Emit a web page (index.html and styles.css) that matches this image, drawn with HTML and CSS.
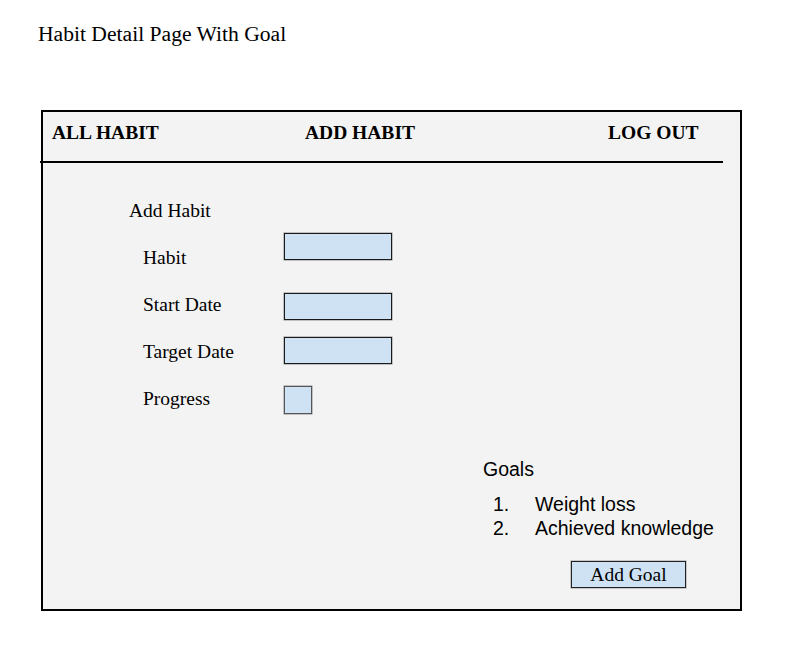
FILE: index.html
```html
<!DOCTYPE html>
<html lang="en">
<head>
<meta charset="utf-8">
<title>Habit Detail Page With Goal</title>
<link rel="stylesheet" href="styles.css">
</head>
<body>
<h1 class="page-title">Habit Detail Page With Goal</h1>
<div class="frame">
  <nav class="nav">
    <a class="nav-link">ALL HABIT</a>
    <a class="nav-link">ADD HABIT</a>
    <a class="nav-link">LOG OUT</a>
  </nav>
  <div class="divider"></div>
  <main class="content">
    <section class="habit-form">
      <h2 class="form-title">Add Habit</h2>
      <div class="field"><span class="label">Habit</span><span class="input input-habit"></span></div>
      <div class="field"><span class="label">Start Date</span><span class="input input-start"></span></div>
      <div class="field"><span class="label">Target Date</span><span class="input input-target"></span></div>
      <div class="field"><span class="label">Progress</span><span class="input input-progress"></span></div>
    </section>
    <section class="goals">
      <h2 class="goals-title">Goals</h2>
      <ol class="goal-list">
        <li class="goal"><span class="goal-num">1.</span><span class="goal-text">Weight loss</span></li>
        <li class="goal"><span class="goal-num">2.</span><span class="goal-text">Achieved knowledge</span></li>
      </ol>
      <button class="add-goal">Add Goal</button>
    </section>
  </main>
</div>
</body>
</html>
```

FILE: styles.css
```css
html, body {
  margin: 0;
  padding: 0;
  background: #ffffff;
  color: #000000;
}

body {
  font-family: "Liberation Serif", "Times New Roman", serif;
}

.page-title {
  margin: 0;
  padding: 22px 0 0 38px;
  font-size: 21.6px;
  line-height: 24px;
  font-weight: normal;
}

.frame {
  box-sizing: border-box;
  margin: 64px 0 0 41px;
  width: 701px;
  height: 501px;
  border: 2px solid #000;
  background: #f3f3f3;
}

.nav {
  display: grid;
  grid-template-columns: 253px 303px 1fr;
  padding: 9px 0 0 9px;
  font-size: 19.5px;
  line-height: 24px;
  font-weight: bold;
}

.nav-link {
  color: #000;
  text-decoration: none;
  white-space: nowrap;
}

.divider {
  margin: 16px 0 0 -3px;
  width: 683px;
  height: 2px;
  background: #000;
}

.content {
  display: flex;
  flex-direction: column;
}

.habit-form {
  display: flex;
  flex-direction: column;
  align-items: flex-start;
  gap: 23px;
  padding: 36px 0 0 86px;
  font-size: 19.5px;
  line-height: 24px;
}

.form-title {
  margin: 0;
  font-size: 19.5px;
  line-height: 24px;
  font-weight: normal;
}

.field {
  display: flex;
  align-items: flex-start;
  height: 24px;
  padding-left: 14px;
}

.label {
  width: 141px;
  white-space: nowrap;
}

.input {
  box-sizing: border-box;
  display: block;
  flex: none;
  width: 108px;
  height: 27px;
  background: #cfe2f3;
  border: 1px solid #1a1a1a;
  box-shadow: 0 0 0 0.6px rgba(0, 0, 0, 0.35);
}

.input-habit { margin-top: -13px; }
.input-start { margin-top: 0; }
.input-target { margin-top: -3px; }

.input-progress {
  width: 28px;
  height: 28px;
  margin-top: -1px;
  border-color: #555;
}

.goals {
  margin-top: 46px;
  padding-left: 440px;
  font-family: "Liberation Sans", Arial, sans-serif;
  font-size: 19.5px;
  line-height: 24px;
}

.goals-title {
  margin: 0;
  font-size: 19.5px;
  line-height: 24px;
  font-weight: normal;
}

.goal-list {
  list-style: none;
  margin: 11px 0 0 0;
  padding: 0 0 0 10px;
}

.goal {
  display: flex;
  white-space: nowrap;
}

.goal-num {
  width: 42px;
}

.add-goal {
  box-sizing: border-box;
  display: block;
  margin: 21px 0 0 88px;
  width: 115px;
  height: 27px;
  padding: 0;
  background: #cfe2f3;
  border: 1px solid #222;
  box-shadow: 0 0 0 0.6px rgba(0, 0, 0, 0.3);
  font-family: "Liberation Serif", "Times New Roman", serif;
  font-size: 19.5px;
  line-height: 25px;
  color: #000;
  text-align: center;
}
```
